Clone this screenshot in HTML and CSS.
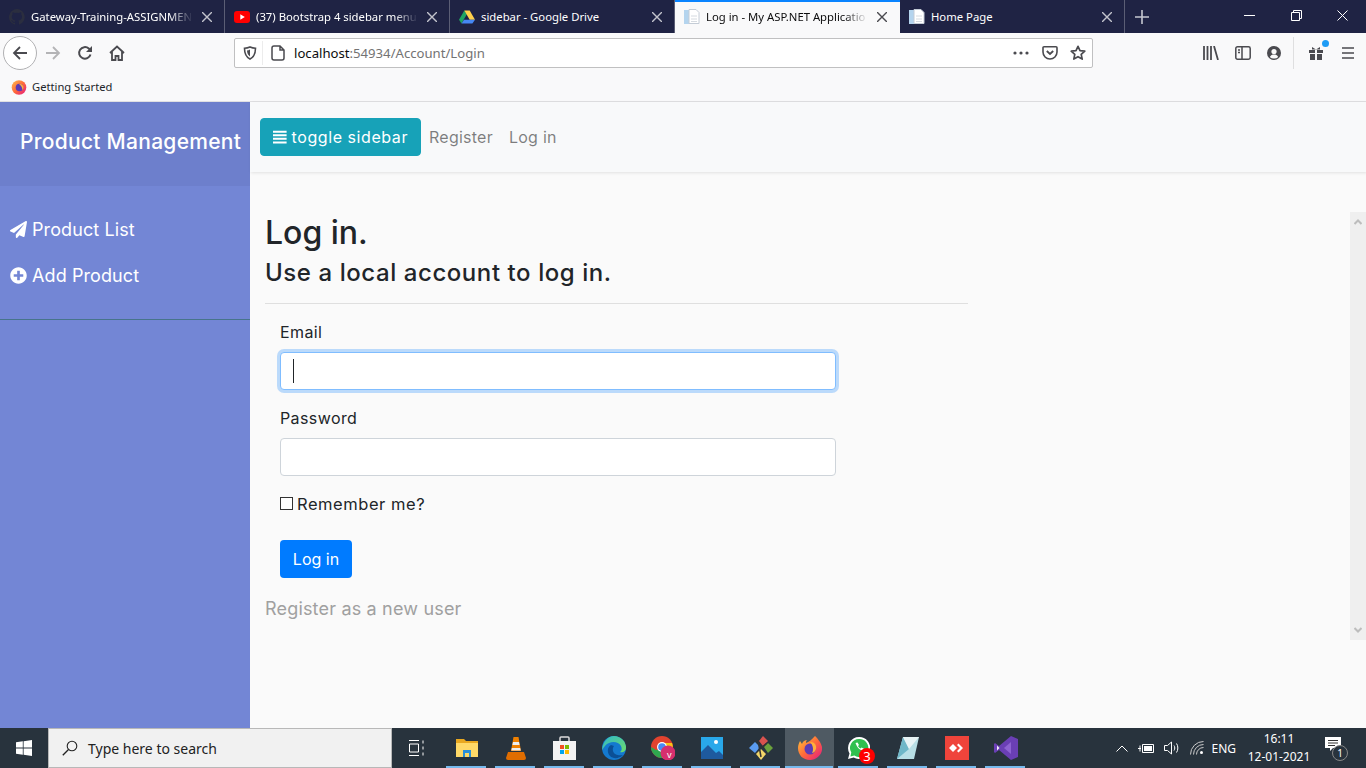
FILE: index.html
```html
<!DOCTYPE html>
<html lang="en">

<head>
    <meta charset="UTF-8">
    <meta name="viewport" content="width=device-width, initial-scale=1.0">
    <title>Log in - My ASP.NET Application</title>
    <link rel="stylesheet" href="styles.css">
</head>

<body>
    <!-- browser tabs -->
    <div class="tabbar">
        <div class="tab">
            <svg class="fav" viewBox="0 0 16 16"><path fill="#2b2e3f" d="M8 0a8 8 0 0 0-2.500 15.600c.4.100.5-.2.5-.4v-1.400c-2.200.5-2.700-1-2.700-1-.4-.9-.9-1.200-.9-1.200-.7-.5.1-.5.1-.5.8.1 1.200.8 1.200.8.7 1.200 1.900.9 2.300.7.1-.5.3-.9.5-1.100-1.800-.2-3.700-.9-3.700-4 0-.9.3-1.600.8-2.100-.1-.2-.4-1 .1-2.100 0 0 .7-.2 2.200.8a7.600 7.600 0 0 1 4 0c1.500-1 2.200-.8 2.200-.8.4 1.100.2 1.900.1 2.100.5.6.8 1.300.8 2.100 0 3.100-1.900 3.700-3.700 3.900.3.300.6.800.6 1.500v2.200c0 .2.100.5.600.4A8 8 0 0 0 8 0z"/></svg>
            <span class="tab-title">Gateway-Training-ASSIGNMEN</span>
            <svg class="tab-x" viewBox="0 0 10 10"><path d="M0 0l10 10M10 0L0 10"/></svg>
        </div>
        <div class="tab">
            <svg class="fav" viewBox="0 0 16 16"><rect y="2" width="16" height="12" rx="3" fill="#f00"/><path fill="#fff" d="M6.300 5.200l4.500 2.800-4.500 2.800z"/></svg>
            <span class="tab-title">(37) Bootstrap 4 sidebar menu w</span>
            <svg class="tab-x" viewBox="0 0 10 10"><path d="M0 0l10 10M10 0L0 10"/></svg>
        </div>
        <div class="tab">
            <svg class="fav" viewBox="0 0 16 16"><path fill="#1fa463" d="M5.300 1.500L0 10.700l2.500 3.800 5.300-9.200z"/><path fill="#ffd04b" d="M5.300 1.500h5.400l5.300 9.200h-5.300z"/><path fill="#4688f4" d="M2.500 14.500h10.900l2.600-3.800H5z"/></svg>
            <span class="tab-title title-full">sidebar - Google Drive</span>
            <svg class="tab-x" viewBox="0 0 10 10"><path d="M0 0l10 10M10 0L0 10"/></svg>
        </div>
        <div class="tab tab-active">
            <svg class="fav" viewBox="0 0 16 16"><rect x="0" y="1" width="5" height="14" fill="#b4d4ee"/><path fill="#fff" stroke="#c4ccd6" d="M5 .5h7l3 3v11H5z"/><path stroke="#d5dae0" d="M7 7h6M7 10h6M7 12.500h6"/></svg>
            <span class="tab-title">Log in - My ASP.NET Applicatio</span>
            <svg class="tab-x" viewBox="0 0 10 10"><path d="M0 0l10 10M10 0L0 10"/></svg>
        </div>
        <div class="tab">
            <svg class="fav" viewBox="0 0 16 16"><rect x="0" y="1" width="5" height="14" fill="#b4d4ee"/><path fill="#fff" stroke="#c4ccd6" d="M5 .5h7l3 3v11H5z"/><path stroke="#d5dae0" d="M7 7h6M7 10h6M7 12.500h6"/></svg>
            <span class="tab-title title-full">Home Page</span>
            <svg class="tab-x" viewBox="0 0 10 10"><path d="M0 0l10 10M10 0L0 10"/></svg>
        </div>
        <div class="new-tab">
            <svg width="14" height="14" viewBox="0 0 14 14"><path stroke="#c5c7d0" stroke-width="1.600" d="M7 0v14M0 7h14"/></svg>
        </div>
        <div class="win-btns">
            <div class="win-btn"><svg width="11" height="11" viewBox="0 0 11 11"><path stroke="#fff" d="M0 5.500h11"/></svg></div>
            <div class="win-btn"><svg width="11" height="11" viewBox="0 0 11 11"><path fill="none" stroke="#fff" d="M.5 2.500h8v8h-8zM2.500 2.500v-2h8v8h-2"/></svg></div>
            <div class="win-btn"><svg width="11" height="11" viewBox="0 0 11 11"><path stroke="#fff" d="M.5.500l10 10M10.500.500l-10 10"/></svg></div>
        </div>
    </div>

    <!-- address bar -->
    <div class="toolbar">
        <div class="back-btn">
            <svg width="16" height="16" viewBox="0 0 16 16"><path fill="none" stroke="#4a4a4f" stroke-width="1.800" d="M15 8H2M8 2L2 8l6 6"/></svg>
        </div>
        <div class="tool-btn">
            <svg width="16" height="16" viewBox="0 0 16 16"><path fill="none" stroke="#b4b4b6" stroke-width="1.800" d="M1 8h13M8 2l6 6-6 6"/></svg>
        </div>
        <div class="tool-btn">
            <svg width="16" height="16" viewBox="0 0 16 16"><path fill="none" stroke="#4a4a4f" stroke-width="2" d="M13.500 9.500A5.800 5.800 0 1 1 11.800 3.600L14 5.500"/><path fill="#4a4a4f" d="M15 1v6H9z"/></svg>
        </div>
        <div class="tool-btn">
            <svg width="16" height="16" viewBox="0 0 16 16"><path fill="none" stroke="#4a4a4f" stroke-width="1.800" d="M1 8l7-6.500L15 8M3 6.500V15h3.500v-4h3v4H13V6.500"/></svg>
        </div>
        <div class="urlbar">
            <svg class="shield" width="14" height="14" viewBox="0 0 14 14"><path fill="none" stroke="#4a4a4f" stroke-width="1.600" d="M7 1c2 .9 3.500 1.200 5.500 1.200 0 5-1.500 8.800-5.500 10.800C3 11 1.500 7.200 1.500 2.200 3.500 2.200 5 1.900 7 1z"/><path fill="#4a4a4f" d="M7 3.500v7c-2-1.400-3-3.400-3-6 1.200 0 2-.4 3-1z"/></svg>
            <span class="url-sep"></span>
            <svg class="page-ico" width="14" height="16" viewBox="0 0 14 16"><path fill="none" stroke="#4a4a4f" stroke-width="1.500" d="M1 3a2 2 0 0 1 2-2h6l4 4v8a2 2 0 0 1-2 2H3a2 2 0 0 1-2-2zM9 1v4h4"/></svg>
            <span class="url-text">localhost<span class="url-dim">:54934/Account/Login</span></span>
            <span class="url-right">
                <svg width="16" height="4" viewBox="0 0 16 4"><circle cx="2" cy="2" r="1.600" fill="#4a4a4f"/><circle cx="8" cy="2" r="1.600" fill="#4a4a4f"/><circle cx="14" cy="2" r="1.600" fill="#4a4a4f"/></svg>
                <svg width="16" height="16" viewBox="0 0 16 16"><path fill="none" stroke="#4a4a4f" stroke-width="1.600" d="M2 1.800h12a1 1 0 0 1 1 1V7a7 7 0 0 1-14 0V2.800a1 1 0 0 1 1-1z"/><path fill="none" stroke="#4a4a4f" stroke-width="1.800" d="M4.800 6L8 9l3.200-3"/></svg>
                <svg class="star-ico" width="16" height="16" viewBox="0 0 16 16"><path fill="none" stroke="#4a4a4f" stroke-width="1.700" stroke-linejoin="round" d="M8 1.300l2 4.400 4.800.5-3.600 3.200 1 4.700L8 11.700l-4.200 2.400 1-4.700L1.200 6.200 6 5.700z"/></svg>
            </span>
        </div>
        <div class="tool-right">
            <svg width="16" height="14" viewBox="0 0 16 14"><path stroke="#4a4a4f" stroke-width="1.800" fill="none" d="M1 0v14M4.500 0v14M8 0v14M11 0l4 14"/></svg>
            <svg width="16" height="14" viewBox="0 0 16 14"><path fill="none" stroke="#4a4a4f" stroke-width="1.500" d="M2.500.800h11a1.700 1.700 0 0 1 1.700 1.700v9a1.700 1.700 0 0 1-1.700 1.700h-11A1.700 1.700 0 0 1 .8 11.500v-9A1.700 1.700 0 0 1 2.500.800zM7 .8v12.400M3 4h2M3 6.500h2"/></svg>
            <svg width="14" height="14" viewBox="0 0 14 14"><circle cx="7" cy="7" r="7" fill="#4a4a4f"/><circle cx="7" cy="5.500" r="2.600" fill="#f9f9fa"/><path fill="#f9f9fa" d="M2.800 11c1-1.800 2.500-2.400 4.200-2.400s3.200.6 4.200 2.400A5.500 5.500 0 0 1 7 12.500 5.500 5.500 0 0 1 2.800 11z"/></svg>
            <span class="tool-sep"></span>
            <span class="gift">
                <svg width="16" height="16" viewBox="0 0 16 16"><path fill="#4a4a4f" d="M1 5h6v3H1zM9 5h6v3H9zM2 9h5v6H2zM9 9h5v6H9zM4 2l4 2.500L12 2v2.500H4z"/></svg>
                <span class="gift-dot"></span>
            </span>
            <svg class="menu-ico" width="14" height="12" viewBox="0 0 14 12"><path stroke="#4a4a4f" stroke-width="1.700" d="M1 1h12M1 6h12M1 11h12"/></svg>
        </div>
    </div>

    <!-- bookmarks -->
    <div class="bookmarks">
        <svg width="16" height="16" viewBox="0 0 16 16"><defs><linearGradient id="fxb" x1="0" y1="0" x2="1" y2="1"><stop offset="0" stop-color="#ffbd4f"/><stop offset=".5" stop-color="#ff6a39"/><stop offset="1" stop-color="#e31587"/></linearGradient></defs><circle cx="8" cy="8.500" r="7.300" fill="url(#fxb)"/><circle cx="8.500" cy="8.500" r="3.800" fill="#5b3bb5"/><path fill="#ffb03b" d="M8 5c3-.6 4.500 1.500 4.500 3.500 0 1-.5 2-1.300 2.600.4-2.300-1-4.800-3.200-6.100z"/></svg>
        <span>Getting Started</span>
    </div>

    <!-- the page itself -->
    <div class="page">
        <nav class="sidebar">
            <div class="side-head">
                <h3>Product Management</h3>
            </div>
            <ul class="side-menu">
                <li>
                    <svg width="17" height="17" viewBox="0 0 512 512"><path fill="#fff" d="M476 3.200L12.500 270.600c-18.100 10.400-15.800 35.600 2.200 43.200L121 358.400l287.300-253.200c5.500-4.900 13.300 2.600 8.600 8.300L176 407v80.500c0 23.600 28.500 32.900 42.500 15.800L282 426l124.600 52.200c14.200 6 30.400-2.900 33-18.200l72-432C515 7.800 493.300-6.800 476 3.200z"/></svg>
                    <span>Product List</span>
                </li>
                <li>
                    <svg width="17" height="17" viewBox="0 0 512 512"><path fill="#fff" d="M256 8C119 8 8 119 8 256s111 248 248 248 248-111 248-248S393 8 256 8zm144 276c0 6.600-5.400 12-12 12h-92v92c0 6.600-5.400 12-12 12h-56c-6.600 0-12-5.400-12-12v-92h-92c-6.600 0-12-5.400-12-12v-56c0-6.600 5.400-12 12-12h92v-92c0-6.600 5.400-12 12-12h56c6.600 0 12 5.400 12 12v92h92c6.600 0 12 5.400 12 12v56z"/></svg>
                    <span>Add Product</span>
                </li>
            </ul>
        </nav>

        <main class="main">
            <div class="navbar">
                <button class="btn-toggle">
                    <svg width="14" height="14" viewBox="0 0 14 14"><path stroke="#fff" stroke-width="2" d="M0 1.500h14M0 5.200h14M0 8.900h14M0 12.600h14"/></svg>
                    toggle sidebar
                </button>
                <a class="nav-link">Register</a>
                <a class="nav-link">Log in</a>
            </div>

            <div class="content">
                <div class="content-col">
                    <h2>Log in.</h2>
                    <h4>Use a local account to log in.</h4>
                    <hr>
                    <form class="login-form">
                        <div class="form-group">
                            <label>Email</label>
                            <div class="input-wrap">
                                <input class="form-control focused" type="text">
                                <span class="caret"></span>
                            </div>
                        </div>
                        <div class="form-group">
                            <label>Password</label>
                            <input class="form-control" type="password">
                        </div>
                        <div class="remember">
                            <span class="check"></span>
                            <span>Remember me?</span>
                        </div>
                        <button class="btn-login" type="button">Log in</button>
                    </form>
                    <a class="register-link">Register as a new user</a>
                </div>
                <div class="scroll-track">
                    <svg width="8" height="6" viewBox="0 0 8 6"><path fill="none" stroke="#bdbdbd" stroke-width="2" d="M.5 5L4 1.500 7.500 5"/></svg>
                    <svg width="8" height="6" viewBox="0 0 8 6"><path fill="none" stroke="#bdbdbd" stroke-width="2" d="M.5 1L4 4.500 7.500 1"/></svg>
                </div>
            </div>
        </main>
    </div>

    <!-- windows taskbar -->
    <div class="taskbar">
        <div class="start">
            <svg width="16" height="16" viewBox="0 0 16 16"><path fill="#fff" d="M0 2.300l6.800-1v6.300H0zM7.600 1.200L16 0v7.600H7.600zM0 8.400h6.800v6.300l-6.800-1zM7.600 8.400H16V16l-8.400-1.200z"/></svg>
        </div>
        <div class="search">
            <svg width="16" height="16" viewBox="0 0 16 16"><circle cx="10" cy="6" r="4.800" fill="none" stroke="#222" stroke-width="1.100"/><path stroke="#222" stroke-width="1.300" d="M6.500 9.500L.8 15.200"/></svg>
            <span>Type here to search</span>
        </div>
        <div class="task-view">
            <svg width="16" height="16" viewBox="0 0 16 16"><path fill="none" stroke="#fff" d="M1 .5h10M1 15.500h10M1.500 4h9v8h-9zM15 .5v3M15 6.500v3M15 12.500v3"/></svg>
        </div>
        <div class="apps">
            <div class="app on"><svg width="22" height="20" viewBox="0 0 22 20"><path fill="#e9a820" d="M0 1h8l2 2h12v16H0z"/><path fill="#ffd968" d="M0 5h22v14H0z"/><path fill="#2b8fd8" d="M7 12h8v7h-2v-4H9v4H7z"/></svg></div>
            <div class="app"><svg width="20" height="24" viewBox="0 0 20 24"><path fill="#f08000" d="M7.500 1h5L15 15H5z"/><path fill="#eee" d="M7 6h6l.6 3H6.400zM5.800 12h8.400l.5 2.500H5.300z"/><path fill="#e06d00" d="M2 16h16l2 6a2 2 0 0 1-2 2H2a2 2 0 0 1-2-2z"/></svg></div>
            <div class="app"><svg width="23" height="24" viewBox="0 0 23 24"><path fill="none" stroke="#ddd" stroke-width="1.500" d="M7 6V2a1 1 0 0 1 1-1h7a1 1 0 0 1 1 1v4"/><rect y="5" width="23" height="19" fill="#f3f3f3"/><rect x="7" y="9" width="4" height="4" fill="#f25022"/><rect x="12" y="9" width="4" height="4" fill="#7fba00"/><rect x="7" y="14" width="4" height="4" fill="#00a4ef"/><rect x="12" y="14" width="4" height="4" fill="#ffb900"/></svg></div>
            <div class="app"><svg width="24" height="24" viewBox="0 0 24 24"><defs><linearGradient id="edg" x1="0" y1="0" x2="1" y2="1"><stop offset="0" stop-color="#2fb9c9"/><stop offset="1" stop-color="#6fdb6a"/></linearGradient></defs><circle cx="12" cy="12" r="12" fill="#1479cf"/><path fill="#0b4f96" d="M9 9c-4 2-4 8-1 11 3 3 9 3 13-1-4 1-9 0-10-4-.5-2 0-4 1-5z"/><path fill="url(#edg)" d="M12 0a12 12 0 0 1 12 12c0 3-3 5-6 4 2-1 2-4 1-6-2-4-8-5-12-3-3 1-5 4-6.800 7C.5 6 6 0 12 0z"/></svg></div>
            <div class="app chrome"><svg width="24" height="24" viewBox="0 0 24 24"><circle cx="11" cy="11" r="11" fill="#e2432f"/><path fill="#2fa84f" d="M0 11c0 6 5 11 11 11l4-8H5z"/><path fill="#f8c417" d="M11 22a11 11 0 0 0 10-15h-9z"/><circle cx="11" cy="11" r="5" fill="#fff"/><circle cx="11" cy="11" r="3.800" fill="#4a8af4"/><circle cx="17" cy="17" r="7.500" fill="#d62f6e"/></svg><span class="chrome-v">v</span></div>
            <div class="app"><svg width="22" height="22" viewBox="0 0 22 22"><rect width="22" height="22" fill="#29a8ea"/><path fill="#1e5a9e" d="M0 22V15l7-7 8 8 3-2 4 4v4z"/><circle cx="15" cy="5" r="2" fill="#fff"/></svg></div>
            <div class="app"><svg width="24" height="24" viewBox="0 0 24 24"><path fill="#d9534f" d="M10 5l4-5 5 5-5 5z"/><path fill="#6ba23c" d="M15 11l4-4 5 5-5 5z"/><path fill="#5b9bf0" d="M0 12l6-6 5 5-5 6z"/><path fill="#f3d66a" d="M7 18l5-5 5 5-5 6z"/><path stroke="#333" stroke-width="1.500" d="M9 4l3 17M12 12l6-5"/></svg></div>
            <div class="app active on"><svg width="24" height="24" viewBox="0 0 24 24"><defs><linearGradient id="fxt" x1="0" y1="0" x2="1" y2="1"><stop offset="0" stop-color="#ffc83a"/><stop offset=".5" stop-color="#ff6a39"/><stop offset="1" stop-color="#e31587"/></linearGradient></defs><path fill="url(#fxt)" d="M17 0c2 2 6 6 7 11 1 7-5 13-12 13S0 19 0 12c0-3 1-5 2-7l2 3c1-3 3-4 5-4-1 1-1 2-1 3 3-1 5-3 9-7z"/><circle cx="12" cy="13" r="5.500" fill="#5b3bb5"/><path fill="#ffb03b" d="M12 6c4-.500 7 3 6 7-1 3-3 4-4 4 2-3 1-8-2-11z"/></svg></div>
            <div class="app wa"><svg width="22" height="22" viewBox="0 0 22 22"><path fill="#fff" d="M11 0a11 11 0 0 0-9.500 16.500L0 22l5.700-1.500A11 11 0 1 0 11 0z"/><path fill="#30c04f" d="M11 2a9 9 0 0 0-7.700 13.600l-.9 3.900 4-1A9 9 0 1 0 11 2z"/><path fill="#fff" d="M7.500 6c2 5 4 7 8 8l1-2-3-1.500-1 1c-1-.5-2-1.500-2.500-2.500l1-1L9.500 5.500z"/></svg><span class="wa-badge">3</span></div>
            <div class="app"><svg width="22" height="24" viewBox="0 0 22 24"><path fill="#b8dfe6" d="M6 1h16l-5 22H0z"/><path fill="#6fb7c8" d="M6 1l6 12-12 10z"/><path fill="#e8f4f6" d="M6 1h16L12 13z"/></svg></div>
            <div class="app"><svg width="24" height="24" viewBox="0 0 24 24"><rect width="24" height="24" fill="#ef443b"/><path fill="#fff" d="M8 8l4 4-4 4-4-4zM13.500 7.500L18 12l-4.500 4.500L12 15l3-3-3-3z"/></svg></div>
            <div class="app"><svg width="24" height="24" viewBox="0 0 24 24"><path fill="#6a3fb5" d="M17 0l7 3v18l-7 3L5 14l-4 3-1-1V8l1-1 4 3z"/><path fill="#8d63d2" d="M17 6v12l-7-6z"/><path fill="#fff" opacity=".9" d="M3 9.500v5l2.500-2.500z"/></svg></div>
        </div>
        <div class="tray">
            <svg width="12" height="7" viewBox="0 0 12 7"><path fill="none" stroke="#fff" d="M.5 6.500L6 1l5.500 5.500"/></svg>
            <svg width="16" height="12" viewBox="0 0 16 12"><path fill="none" stroke="#fff" d="M4.500 2.500h11v8h-11zM0 6.500h3M2 3.500v6"/><rect x="6" y="4" width="8" height="5" fill="#fff"/></svg>
            <svg width="16" height="14" viewBox="0 0 16 14"><path fill="none" stroke="#fff" d="M.5 4.500h3l4-3.500v12l-4-3.500h-3zM10 4.500c1 1.500 1 3.500 0 5M12.500 2.500c1.800 2.500 1.800 6.500 0 9"/></svg>
            <svg width="14" height="14" viewBox="0 0 14 14"><g fill="none" stroke="#ccc"><path d="M.5 13.500a13 13 0 0 1 13-13M3.500 13.500a10 10 0 0 1 10-10M6.500 13.500a7 7 0 0 1 7-7"/></g><circle cx="11.500" cy="11.500" r="1.500" fill="#fff"/></svg>
            <span class="tray-lang">ENG</span>
            <div class="clock">
                <span>16:11</span>
                <span>12-01-2021</span>
            </div>
            <div class="notif">
                <svg width="16" height="14" viewBox="0 0 16 14"><path fill="#fff" d="M0 0h16v11H8l-3 3v-3H0z"/><path stroke="#333" d="M3 3.500h10M3 6h10M3 8.500h7"/></svg>
                <span class="notif-badge">1</span>
            </div>
        </div>
    </div>
</body>

</html>
```

FILE: styles.css
```css
* {
    box-sizing: border-box;
}

html,
body {
    height: 100%;
}

body {
    margin: 0;
    display: flex;
    flex-direction: column;
    height: 768px;
    overflow: hidden;
    font-family: "Inter", "Liberation Sans", sans-serif;
    color: #212529;
    background: #fafafa;
}

/* tabs */
.tabbar {
    display: flex;
    flex: none;
    height: 33px;
    background: #1f2344;
    font-family: "Noto Sans", sans-serif;
    font-size: 11.300px;
    color: #fff;
}

.tab {
    display: flex;
    align-items: center;
    width: 225px;
    padding: 0 12px 0 9px;
    border-right: 1px solid #5b5e75;
}

.tab-active {
    background: #f9f9fa;
    color: #0c0c0d;
    border-top: 2px solid #0a84ff;
    border-right: 0;
    padding-right: 13px;
    padding-bottom: 2px;
}

.fav {
    flex: none;
    width: 16px;
    height: 16px;
    margin-right: 6px;
}

.tab-title {
    flex: 1;
    min-width: 0;
    white-space: nowrap;
    -webkit-mask-image: linear-gradient(to left, transparent 0, #000 24px);
    mask-image: linear-gradient(to left, transparent 0, #000 24px);
}

.title-full {
    -webkit-mask-image: none;
    mask-image: none;
}

.tab-x {
    flex: none;
    width: 10px;
    height: 10px;
    margin-left: 9px;
    stroke: #c2c3cc;
    stroke-width: 1.400;
}

.tab-active .tab-x {
    stroke: #4a4a4f;
}

.new-tab {
    display: flex;
    align-items: center;
    justify-content: center;
    width: 34px;
}

.win-btns {
    display: flex;
    margin-left: auto;
}

.win-btn {
    display: flex;
    align-items: center;
    justify-content: center;
    width: 46.500px;
    padding-bottom: 2px;
}

/* address bar */
.toolbar {
    display: flex;
    flex: none;
    align-items: center;
    height: 40px;
    padding-left: 3px;
    background: #f9f9fa;
}

.back-btn {
    display: flex;
    align-items: center;
    justify-content: center;
    width: 34px;
    height: 34px;
    background: #fff;
    border: 1px solid #b1b1b3;
    border-radius: 50%;
}

.tool-btn {
    display: flex;
    align-items: center;
    justify-content: center;
    width: 32px;
    height: 32px;
}

.urlbar {
    display: flex;
    align-items: center;
    width: 859px;
    height: 30px;
    margin-left: 101px;
    background: #fff;
    border: 1px solid #c0c0c1;
    border-radius: 2px;
    font-family: "Noto Sans", sans-serif;
    font-size: 13.150px;
    color: #0c0c0d;
}

.shield {
    margin-left: 8px;
}

.url-sep {
    width: 1px;
    height: 24px;
    margin: 0 8px 0 5px;
    background: #ececec;
}

.page-ico {
    margin-right: 9px;
}

.url-dim {
    color: #737373;
}

.url-right {
    display: flex;
    align-items: center;
    gap: 13px;
    margin-left: auto;
    margin-right: 6px;
}

.star-ico {
    margin-left: -1px;
}

.tool-right {
    display: flex;
    align-items: center;
    gap: 16px;
    margin-left: 110px;
}

.tool-sep {
    width: 1px;
    height: 32px;
    margin: 0 -2px 0 -4px;
    background: #dfdfe0;
}

.menu-ico {
    margin-left: 1px;
}

.gift {
    position: relative;
    display: flex;
}

.gift-dot {
    position: absolute;
    top: -5px;
    right: -5px;
    width: 7px;
    height: 7px;
    border-radius: 50%;
    background: #1e9cf5;
}

/* bookmarks */
.bookmarks {
    display: flex;
    flex: none;
    align-items: center;
    gap: 5px;
    height: 29px;
    padding: 0 0 1px 11px;
    background: #f9f9fa;
    border-bottom: 1px solid #e0e0e2;
    font-family: "Noto Sans", sans-serif;
    font-size: 11.200px;
}

/* page */
.page {
    display: flex;
    flex: 1;
    min-height: 0;
}

.sidebar {
    width: 250px;
    flex: none;
    background: #7386d5;
    color: #fff;
}

.side-head {
    display: flex;
    align-items: center;
    height: 84px;
    padding: 0 0 6px 20px;
    background: #6d7fcc;
}

.side-head h3 {
    margin: 0;
    font-size: 21px;
    font-weight: 500;
    letter-spacing: .28px;
    white-space: nowrap;
}

.side-menu {
    margin: 0;
    padding: 20px 0 21px;
    list-style: none;
    border-bottom: 1px solid #47748b;
}

.side-menu li {
    display: flex;
    align-items: center;
    gap: 5px;
    height: 46px;
    padding-left: 10px;
    font-size: 18px;
    letter-spacing: .1px;
}

.main {
    flex: 1;
    min-width: 0;
}

.navbar {
    display: flex;
    align-items: center;
    gap: 16px;
    height: 70px;
    padding-left: 10px;
    background: #f8f9fa;
    box-shadow: 1px 1px 3px rgba(0, 0, 0, .1);
}

.btn-toggle {
    display: flex;
    align-items: center;
    gap: 5px;
    height: 38px;
    width: 161px;
    padding: 0 12px;
    margin-right: -8px;
    background: #17a2b8;
    border: 1px solid #17a2b8;
    border-radius: 4px;
    font-family: inherit;
    font-size: 16px;
    letter-spacing: .57px;
    color: #fff;
    white-space: nowrap;
}

.nav-link {
    font-size: 16px;
    letter-spacing: .25px;
    color: rgba(0, 0, 0, .5);
}

.content {
    display: flex;
    padding-left: 15px;
}

.content-col {
    width: 703px;
    padding-top: 42px;
}

h2 {
    margin: 0 0 6px;
    font-size: 32px;
    font-weight: 500;
    line-height: 38px;
}

h4 {
    margin: 0;
    font-size: 24px;
    font-weight: 500;
    letter-spacing: .57px;
    line-height: 29px;
}

hr {
    margin: 16px 0;
    border: 0;
    border-top: 1px solid #dfdfdf;
}

.login-form {
    width: 571px;
    padding-left: 15px;
}

.form-group {
    margin-bottom: 16px;
}

label {
    display: block;
    margin-bottom: 8px;
    font-size: 16px;
    letter-spacing: .4px;
    line-height: 24px;
}

.input-wrap {
    position: relative;
}

.form-control {
    display: block;
    width: 556px;
    height: 38px;
    padding: 6px 12px;
    background: #fff;
    border: 1px solid #ced4da;
    border-radius: 4px;
    outline: 0;
}

.focused {
    border-color: #80bdff;
    box-shadow: 0 0 0 3px rgba(0, 123, 255, .25);
}

.caret {
    position: absolute;
    top: 7px;
    left: 13px;
    width: 1px;
    height: 24px;
    background: #212529;
}

.remember {
    display: flex;
    align-items: center;
    gap: 4px;
    height: 24px;
    margin-bottom: 24px;
    font-size: 16.500px;
    letter-spacing: .55px;
}

.check {
    width: 13px;
    height: 13px;
    margin-top: -2px;
    background: #fff;
    border: 1px solid #333;
}

.btn-login {
    display: block;
    width: 72px;
    height: 38px;
    background: #007bff;
    border: 0;
    border-radius: 4px;
    font-family: inherit;
    font-size: 16px;
    color: #fff;
}

.register-link {
    display: block;
    margin-top: 18px;
    font-size: 18px;
    letter-spacing: .18px;
    line-height: 26px;
    color: #a0a0a0;
}

.scroll-track {
    display: flex;
    flex-direction: column;
    align-items: center;
    justify-content: space-between;
    width: 16px;
    height: 428px;
    margin: 40px 0 0 auto;
    padding: 7px 0;
    background: #efefef;
}

/* taskbar */
.taskbar {
    display: flex;
    flex: none;
    height: 40px;
    background: #28333d;
    color: #fff;
    font-family: "Noto Sans", sans-serif;
    font-size: 12px;
}

.start {
    display: flex;
    align-items: center;
    justify-content: center;
    width: 48px;
}

.search {
    display: flex;
    align-items: center;
    gap: 10px;
    width: 344px;
    padding-left: 13px;
    background: #f1f1f1;
    border: 1px solid #b8b8b8;
    font-size: 14px;
    color: #222;
}

.task-view {
    display: flex;
    align-items: center;
    justify-content: center;
    width: 48px;
}

.apps {
    display: flex;
    margin-left: 2px;
}

.app {
    position: relative;
    display: flex;
    align-items: center;
    justify-content: center;
    width: 49px;
}

.app::after {
    content: "";
    position: absolute;
    left: 4px;
    right: 5px;
    bottom: 0;
    height: 2px;
    background: #76b9ed;
}

.active {
    background: #4f5a63;
}

.active::after {
    left: 0;
    right: 1px;
}

.chrome-v {
    position: absolute;
    top: 20px;
    left: 29px;
    font-size: 9px;
}

.wa-badge {
    position: absolute;
    right: 8px;
    bottom: 4px;
    width: 16px;
    height: 16px;
    border-radius: 50%;
    background: #f00;
    font-size: 13px;
    line-height: 16px;
    text-align: center;
}

.tray {
    display: flex;
    align-items: center;
    gap: 10px;
    margin-left: auto;
    padding-right: 25px;
}

.tray-lang {
    margin-left: -3px;
}

.clock {
    display: flex;
    flex-direction: column;
    align-items: center;
    width: 70px;
    margin-left: -2px;
    line-height: 18px;
}

.notif {
    position: relative;
    margin-left: 1px;
    padding-bottom: 4px;
}

.notif-badge {
    position: absolute;
    top: 8px;
    left: 7px;
    width: 16px;
    height: 16px;
    border: 1px solid #888;
    border-radius: 50%;
    background: #28333d;
    font-size: 10px;
    line-height: 14px;
    text-align: center;
}
```
